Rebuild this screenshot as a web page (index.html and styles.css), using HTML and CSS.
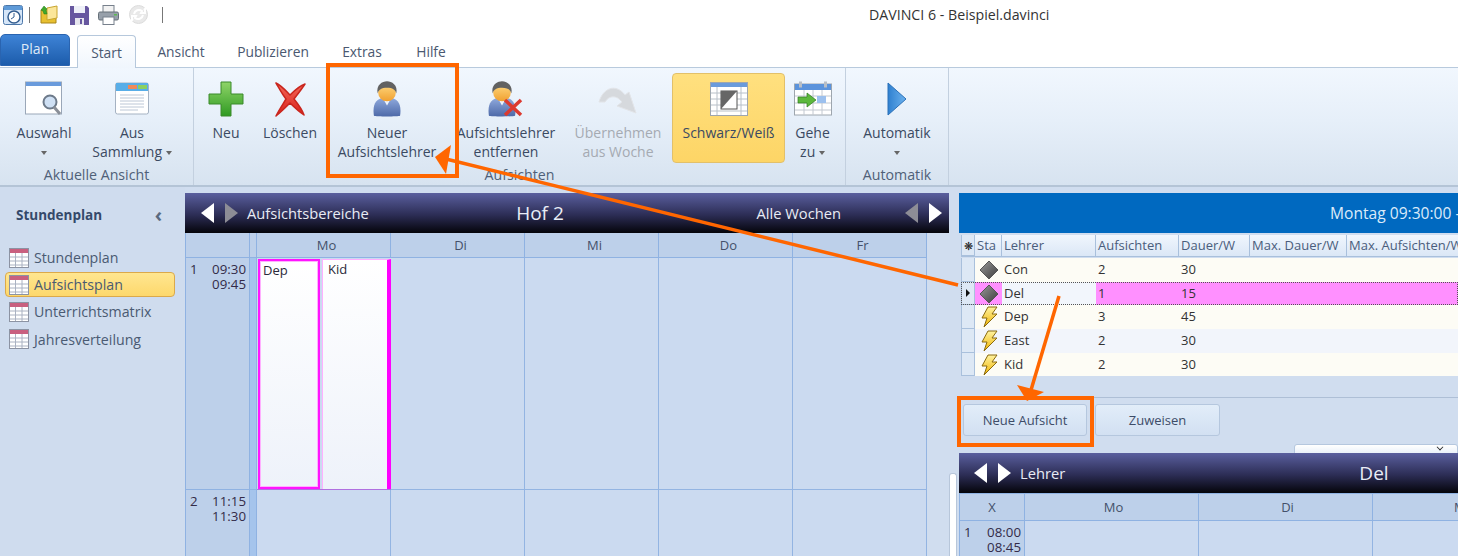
FILE: index.html
```html
<!DOCTYPE html>
<html lang="de">
<head>
<meta charset="utf-8">
<title>DAVINCI 6 - Beispiel.davinci</title>
<link rel="stylesheet" href="styles.css">
</head>
<body>
<svg class="defs" width="0" height="0" aria-hidden="true">
  <defs>
    <linearGradient id="gDia" x1="0" y1="0" x2="1" y2="1"><stop offset="0" stop-color="#9a9a9a"/><stop offset="1" stop-color="#3c3c3c"/></linearGradient>
    <linearGradient id="gBolt" x1="0" y1="0" x2="0" y2="1"><stop offset="0" stop-color="#fff3a0"/><stop offset="1" stop-color="#f0b400"/></linearGradient>
    <linearGradient id="gPlus" x1="0" y1="0" x2="0" y2="1"><stop offset="0" stop-color="#8fd468"/><stop offset="1" stop-color="#2f9a22"/></linearGradient>
    <linearGradient id="gX" x1="0" y1="0" x2="0" y2="1"><stop offset="0" stop-color="#f4685a"/><stop offset="1" stop-color="#d8201a"/></linearGradient>
    <linearGradient id="gPlay" x1="0" y1="0" x2="1" y2="0"><stop offset="0" stop-color="#2f80d0"/><stop offset="1" stop-color="#6cb2ee"/></linearGradient>
    <linearGradient id="gBody" x1="0" y1="0" x2="0" y2="1"><stop offset="0" stop-color="#8fa9dc"/><stop offset="1" stop-color="#4d69a8"/></linearGradient>
    <linearGradient id="gHead" x1="0" y1="0" x2="0" y2="1"><stop offset="0" stop-color="#ffd980"/><stop offset="1" stop-color="#f0a030"/></linearGradient>
    <symbol id="i-table" viewBox="0 0 20 20">
      <rect x="0.5" y="0.5" width="19" height="19" fill="#fff" stroke="#8c93a3"/>
      <rect x="1" y="1" width="18" height="4" fill="#c9607f"/>
      <path d="M1 9h18M1 13h18M1 17h18M6.500 5v14M13 5v14" stroke="#aab2c2" fill="none"/>
    </symbol>
    <symbol id="i-dia" viewBox="0 0 20 20">
      <path d="M10 1l9 9-9 9-9-9z" fill="url(#gDia)" stroke="#555"/>
    </symbol>
    <symbol id="i-bolt" viewBox="0 0 20 22">
      <path d="M9 1h9l-5 7h5L5 21l3-9H3z" fill="url(#gBolt)" stroke="#8a6a10"/>
    </symbol>
    <symbol id="i-person" viewBox="0 0 30 38">
      <path d="M1 37c-2-13 3-18 9-19h10c6 1 11 6 9 19-2 1-26 1-28 0z" fill="url(#gBody)"/>
      <path d="M11 19l4 7 4-7z" fill="#eef3fb"/>
      <circle cx="15" cy="12" r="9.500" fill="url(#gHead)"/>
      <path d="M5 13C3 4 10 0 15 0s12 4 10 13c-1-4-4-6-10-6s-9 2-10 6z" fill="#626262"/>
    </symbol>
  </defs>
</svg>

<div class="app">
  <header class="titlebar">
    <div class="quick">
      <svg class="q q-app" width="20" height="20" viewBox="0 0 20 20"><rect x="0.500" y="0.500" width="19" height="19" rx="2" fill="#d6e6f8" stroke="#4b76a8"/><rect x="1" y="1" width="18" height="4" fill="#5e9ad8"/><circle cx="11" cy="12" r="6" fill="#fff" stroke="#345e90" stroke-width="1.500"/><path d="M11 8v4l-3 2" stroke="#345e90" fill="none"/></svg>
      <span class="q-sep q-sep-a"></span>
      <svg class="q q-open" width="19" height="19" viewBox="0 0 19 19"><path d="M1 5h6l2 2h7v11H1z" fill="#e8c030" stroke="#a88518"/><path d="M7 3l10-2v12l-10 2z" fill="#fbe69a" stroke="#c8a530"/><path d="M1 5l3-4 3 3-1 1 1 4H4L3 6z" fill="#3fa82c" stroke="#25781a" stroke-width="0.500"/></svg>
      <svg class="q q-save" width="19" height="20" viewBox="0 0 19 20"><path d="M0 1h17l2 2v17H0z" fill="#67579f"/><rect x="4" y="1" width="11" height="7" fill="#eef0f8"/><rect x="5" y="13" width="9" height="7" fill="#e6e6ee"/><rect x="10" y="14" width="2" height="5" fill="#67579f"/></svg>
      <svg class="q q-print" width="21" height="20" viewBox="0 0 21 20"><rect x="5" y="0.500" width="11" height="7" fill="#f2f2f2" stroke="#77808c"/><rect x="0.500" y="7" width="20" height="8" rx="1.500" fill="#97a0aa" stroke="#667079"/><rect x="5" y="12" width="11" height="7.500" fill="#fff" stroke="#77808c"/><rect x="16" y="9" width="3" height="1.500" fill="#5dbb50"/></svg>
      <svg class="q q-redo" width="19" height="19" viewBox="0 0 19 19"><circle cx="9.500" cy="9.500" r="9" fill="#e9e9e9" stroke="#dcdcdc"/><path d="M5 9a5 5 0 0 1 8-3l-1 2h4V4l-1 1M14 10a5 5 0 0 1-8 3l1-2H3v4l1-1" fill="none" stroke="#fff" stroke-width="2"/></svg>
      <span class="q-sep q-sep-b"></span>
    </div>
    <div class="doc-title">DAVINCI 6 - Beispiel.davinci</div>
  </header>

  <nav class="tabs">
    <div class="tab-plan">Plan</div>
    <div class="tab tab-active">Start</div>
    <div class="tab tab-ansicht">Ansicht</div>
    <div class="tab tab-pub">Publizieren</div>
    <div class="tab tab-extras">Extras</div>
    <div class="tab tab-hilfe">Hilfe</div>
  </nav>

  <section class="ribbon">
    <div class="group group-view">
      <div class="group-row">
        <div class="rb w88">
          <div class="rb-icon">
            <svg width="38" height="36" viewBox="0 0 38 36"><rect x="0.500" y="1" width="36" height="32" fill="#fff" stroke="#9aa7b8"/><rect x="1" y="1" width="35" height="4" fill="#6a9bdc"/><circle cx="25" cy="21" r="6.500" fill="#cfe0f4" stroke="#6d7a8a" stroke-width="2"/><path d="M29 26l6 7" stroke="#8a8f98" stroke-width="3"/></svg>
          </div>
          <div class="rb-label">Auswahl<br><span class="caret"></span></div>
        </div>
        <div class="rb w88">
          <div class="rb-icon">
            <svg width="34" height="34" viewBox="0 0 34 34"><rect x="0.500" y="1" width="33" height="31" rx="2" fill="#fff" stroke="#a5b2c2"/><rect x="1" y="1" width="32" height="8" fill="#58aee8"/><rect x="13" y="3" width="9" height="4" fill="#ef8a5a"/><rect x="23" y="3" width="9" height="4" fill="#8cd060"/><path d="M5 13h24M5 16h24M5 19h24M5 22h24M5 25h24M5 28h18" stroke="#bcc7d6"/></svg>
          </div>
          <div class="rb-label">Aus<br>Sammlung <span class="caret"></span></div>
        </div>
      </div>
      <div class="group-name">Aktuelle Ansicht</div>
    </div>

    <div class="group group-duty">
      <div class="group-row">
        <div class="rb w64">
          <div class="rb-icon">
            <svg width="36" height="36" viewBox="0 0 36 36"><path d="M13 1h10v12h12v10H23v12H13V23H1V13h12z" fill="url(#gPlus)" stroke="#3a8a2a"/></svg>
          </div>
          <div class="rb-label">Neu</div>
        </div>
        <div class="rb w64">
          <div class="rb-icon">
            <svg width="32" height="35" viewBox="0 0 32 35"><path d="M2 1C8 4 12 9 16 13 20 9 25 4 31 2 27 8 23 13 20 17 24 22 28 27 30 33 24 29 20 25 16 21 12 25 7 30 2 34 5 28 9 22 12 17 8 12 5 6 2 1z" fill="url(#gX)" stroke="#c9261e" stroke-linejoin="round" stroke-width="1.500"/></svg>
          </div>
          <div class="rb-label">Löschen</div>
        </div>
        <div class="rb w130">
          <div class="rb-icon"><svg width="28" height="36"><use href="#i-person"/></svg></div>
          <div class="rb-label">Neuer<br>Aufsichtslehrer</div>
        </div>
        <div class="rb w108">
          <div class="rb-icon">
            <svg width="36" height="36" viewBox="0 0 36 36"><use href="#i-person" width="28" height="36"/><path d="M17 19l16 15M33 19L17 34" stroke="#dc3a30" stroke-width="3.500" fill="none"/></svg>
          </div>
          <div class="rb-label">Aufsichtslehrer<br>entfernen</div>
        </div>
        <div class="rb w96 rb-disabled">
          <div class="rb-icon">
            <svg width="40" height="30" viewBox="0 0 40 30"><path d="M1 18C5 4 18-1 27 11l4-3 7 21-19-7 5-4C19 11 11 11 7 18z" fill="#d6d9dd" stroke="#e2e4e8"/></svg>
          </div>
          <div class="rb-label">Übernehmen<br>aus Woche</div>
        </div>
        <div class="rb w113 rb-on">
          <div class="rb-icon">
            <svg width="38" height="34" viewBox="0 0 38 34"><rect x="0.500" y="0.500" width="37" height="33" fill="#fff" stroke="#9ea6ae"/><rect x="1" y="1" width="36" height="4" fill="#6a9bdc"/><path d="M1 11h36M1 17h36M1 23h36M1 29h36M7 5v28M31 5v28" stroke="#b8c0c8"/><rect x="11" y="9" width="16" height="18" fill="#fff" stroke="#555"/><path d="M11 27V9h16z" fill="#666"/></svg>
          </div>
          <div class="rb-label">Schwarz/Weiß</div>
        </div>
        <div class="rb w55">
          <div class="rb-icon">
            <svg width="38" height="36" viewBox="0 0 38 36"><rect x="0.500" y="3" width="37" height="31" fill="#fff" stroke="#9ea6ae"/><rect x="1" y="3" width="36" height="6" fill="#5b93dc"/><rect x="5" y="0.500" width="3" height="6" fill="#b8bec6"/><rect x="30" y="0.500" width="3" height="6" fill="#b8bec6"/><path d="M1 15h36M1 22h36M1 29h36M10 9v25M19 9v25M28 9v25" stroke="#c2c8d0"/><rect x="23" y="15" width="9" height="7" fill="#9cc0ee"/><path d="M4 16h9v-4l9 7-9 7v-4H4z" fill="#5cb83c" stroke="#2f7a20" stroke-width="0.700"/></svg>
          </div>
          <div class="rb-label">Gehe<br>zu <span class="caret"></span></div>
        </div>
      </div>
      <div class="group-name">Aufsichten</div>
    </div>

    <div class="group group-auto">
      <div class="group-row">
        <div class="rb rb-fill">
          <div class="rb-icon">
            <svg width="20" height="34" viewBox="0 0 20 34"><path d="M1 1l18 16L1 33z" fill="url(#gPlay)" stroke="#2a70b8"/></svg>
          </div>
          <div class="rb-label">Automatik<br><span class="caret"></span></div>
        </div>
      </div>
      <div class="group-name">Automatik</div>
    </div>
    <div class="ribbon-rest"></div>
  </section>

  <main class="workspace">
    <aside class="sidebar">
      <div class="side-head"><span>Stundenplan</span><span class="side-collapse">‹</span></div>
      <ul class="side-list">
        <li class="side-item"><svg width="20" height="20"><use href="#i-table"/></svg>Stundenplan</li>
        <li class="side-item side-active"><svg width="20" height="20"><use href="#i-table"/></svg>Aufsichtsplan</li>
        <li class="side-item"><svg width="20" height="20"><use href="#i-table"/></svg>Unterrichtsmatrix</li>
        <li class="side-item"><svg width="20" height="20"><use href="#i-table"/></svg>Jahresverteilung</li>
      </ul>
    </aside>

    <section class="center">
      <div class="darkbar">
        <div class="dark-left">
          <span class="arr arr-l"></span><span class="arr arr-r arr-dim"></span>
          <span class="dark-label">Aufsichtsbereiche</span>
        </div>
        <div class="dark-title dark-title-hof">Hof 2</div>
        <div class="dark-right">
          <span class="dark-label">Alle Wochen</span>
          <span class="arr arr-l arr-dim arr-gap"></span><span class="arr arr-r"></span>
        </div>
      </div>
      <div class="plan">
        <div class="ph"></div><div class="ph-thin"></div>
        <div class="ph ph-day">Mo</div><div class="ph ph-day">Di</div><div class="ph ph-day">Mi</div><div class="ph ph-day">Do</div><div class="ph ph-day">Fr</div>

        <div class="pt r1"><span>1</span><span class="pt-time">09:30<br>09:45</span></div>
        <div class="p-thin r1"></div>
        <div class="pc r1 pc-duty">
          <div class="duty duty-a">Dep</div>
          <div class="duty duty-b">Kid</div>
        </div>
        <div class="pc r1"></div><div class="pc r1"></div><div class="pc r1"></div><div class="pc r1"></div>

        <div class="pt"><span>2</span><span class="pt-time">11:15<br>11:30</span></div>
        <div class="p-thin"></div>
        <div class="pc"></div><div class="pc"></div><div class="pc"></div><div class="pc"></div><div class="pc"></div>
      </div>
    </section>

    <div class="splitter"><div class="scroll-stub"></div></div>

    <section class="right">
      <div class="bluebar">Montag 09:30:00 - 09:45:00</div>
      <div class="teachers">
        <div class="tr th">
          <div class="c0 c0-star">❋</div><div class="c1">Sta</div><div class="c2">Lehrer</div><div class="c3">Aufsichten</div><div class="c4">Dauer/W</div><div class="c5">Max. Dauer/W</div><div class="c6">Max. Aufsichten/W</div>
        </div>
        <div class="tr odd"><div class="c0"></div><div class="c1"><svg width="20" height="20"><use href="#i-dia"/></svg></div><div class="c2">Con</div><div class="c3">2</div><div class="c4">30</div><div class="c5"></div><div class="c6"></div></div>
        <div class="tr sel"><div class="c0"><span class="row-mark"></span></div><div class="c1"><svg width="20" height="20"><use href="#i-dia"/></svg></div><div class="c2">Del</div><div class="c3">1</div><div class="c4">15</div><div class="c5"></div><div class="c6"></div></div>
        <div class="tr odd"><div class="c0"></div><div class="c1"><svg width="20" height="22"><use href="#i-bolt"/></svg></div><div class="c2">Dep</div><div class="c3">3</div><div class="c4">45</div><div class="c5"></div><div class="c6"></div></div>
        <div class="tr even"><div class="c0"></div><div class="c1"><svg width="20" height="22"><use href="#i-bolt"/></svg></div><div class="c2">East</div><div class="c3">2</div><div class="c4">30</div><div class="c5"></div><div class="c6"></div></div>
        <div class="tr odd"><div class="c0"></div><div class="c1"><svg width="20" height="22"><use href="#i-bolt"/></svg></div><div class="c2">Kid</div><div class="c3">2</div><div class="c4">30</div><div class="c5"></div><div class="c6"></div></div>
      </div>
      <div class="tbl-foot"></div>
      <div class="actions">
        <button class="btn" type="button">Neue Aufsicht</button>
        <button class="btn" type="button">Zuweisen</button>
      </div>
      <div class="combo-row"><div class="combo"><span class="combo-v"></span></div></div>
      <div class="darkbar darkbar-r">
        <div class="dark-left dark-left-r">
          <span class="arr arr-l"></span><span class="arr arr-r"></span>
          <span class="dark-label">Lehrer</span>
        </div>
        <div class="dark-title dark-title-del">Del</div>
      </div>
      <div class="plan2">
        <div class="ph ph2">X</div><div class="ph ph2 ph-day2">Mo</div><div class="ph ph2 ph-day2">Di</div><div class="ph ph2 ph-day2">Mi</div>
        <div class="pt pt2"><span>1</span><span class="pt-time">08:00<br>08:45</span></div>
        <div class="pc"></div><div class="pc"></div><div class="pc"></div>
      </div>
    </section>
  </main>

  <svg class="annot" width="1458" height="556" viewBox="0 0 1458 556" aria-hidden="true">
    <rect x="328" y="65" width="129" height="111" fill="none" stroke="#ff6600" stroke-width="4"/>
    <rect x="959" y="398" width="133" height="47" fill="none" stroke="#ff6600" stroke-width="4"/>
    <path d="M958 285L446 159" stroke="#ff6600" stroke-width="3.500" fill="none"/>
    <path d="M435 157L451 145 446 174z" fill="#ff6600"/>
    <path d="M1059 296L1031 390" stroke="#ff6600" stroke-width="3.500" fill="none"/>
    <path d="M1027 401L1017 385 1044 392z" fill="#ff6600"/>
  </svg>
</div>
</body>
</html>
```

FILE: styles.css
```css
* { box-sizing: border-box; }
html, body { margin: 0; padding: 0; }
body {
  width: 1458px;
  height: 556px;
  overflow: hidden;
  background: #fff;
  font-family: "Open Sans", "Noto Sans", "Liberation Sans", sans-serif;
  font-size: 13px;
  color: #3b4a62;
}
.defs { position: absolute; }
.app { position: relative; width: 1458px; height: 556px; overflow: hidden; display: flex; flex-direction: column; }

/* title bar */
.titlebar { height: 33px; display: flex; align-items: flex-start; background: #fff; flex: none; }
.quick { width: 700px; height: 33px; display: flex; align-items: flex-start; padding-left: 3px; padding-top: 5px; }
.q { flex: none; display: block; }
.q-sep { width: 1px; height: 16px; background: #777; margin-top: 2px; flex: none; }
.q-sep-a { margin-left: 6px; }
.q-open { margin-left: 10px; }
.q-save { margin-left: 11px; }
.q-print { margin-left: 9px; }
.q-redo { margin-left: 10px; }
.q-sep-b { margin-left: 14px; }
.doc-title { padding-top: 5px; margin-left: 169px; font-size: 14.200px; color: #333; white-space: nowrap; }

/* tabs */
.tabs { height: 34px; flex: none; display: flex; align-items: flex-end; position: relative; background: #fff; }
.tab-plan {
  width: 70px; height: 32px; margin-bottom: 1px;
  border-radius: 5px 5px 0 0;
  background: linear-gradient(#3e83d6, #1c5cab);
  border: 1px solid #2a64b0;
  color: #dfeaf8; text-align: center; line-height: 28px; font-size: 14px;
}
.tab { height: 32px; line-height: 34px; text-align: center; font-size: 13.800px; color: #4a5870; }
.tab-active {
  width: 59px; margin-left: 7px; margin-bottom: -1px; height: 33px; z-index: 1;
  background: linear-gradient(#fff, #f0f6fd);
  border: 1px solid #b6c8dc; border-bottom: 0; border-radius: 4px 4px 0 0;
}
.tab-ansicht { width: 86px; margin-left: 2px; margin-right: -2px; }
.tab-pub { width: 102px; margin-left: 0; }
.tab-extras { width: 76px; }
.tab-hilfe { width: 62px; }

/* ribbon */
.ribbon {
  height: 120px; flex: none; display: flex;
  background: linear-gradient(#f1f7fe, #e6eff9 45%, #d7e3f0);
  border-top: 1px solid #b8cadd;
  border-bottom: 2px solid #b4c4d6;
}
.group { display: flex; flex-direction: column; padding-top: 5px; border-right: 1px solid #c3d0df; flex: none; }
.group-view { width: 194px; }
.group-duty { width: 652px; }
.group-auto { width: 103px; }
.ribbon-rest { flex: 1; }
.group-row { display: flex; height: 90px; flex: none; }
.group-name { flex: 1; text-align: center; font-size: 14.200px; line-height: 24px; color: #4f6078; }
.group-view .group-row { padding-right: 17px; }
.rb { display: flex; flex-direction: column; align-items: center; flex: none; padding-top: 7px; }
.w88 { width: 88px; }
.w64 { width: 64px; }
.w130 { width: 130px; }
.w108 { width: 108px; }
.w96 { width: 96px; margin-left: 10px; margin-right: 6px; }
.w113 { width: 113px; }
.w55 { width: 55px; }
.rb-fill { flex: 1; }
.rb-icon { height: 38px; margin-bottom: 5px; display: flex; align-items: center; justify-content: center; flex: none; }
.rb-label { text-align: center; font-size: 14px; line-height: 19px; color: #3b4a62; white-space: nowrap; }
.rb-disabled .rb-label { color: #a5aab2; }
.rb-on {
  background: linear-gradient(#ffe07f, #fdd566);
  border: 1px solid #e2c06a; border-radius: 4px;
  padding-top: 6px;
}
.caret {
  display: inline-block; width: 0; height: 0; vertical-align: middle;
  border-left: 3.500px solid transparent; border-right: 3.500px solid transparent;
  border-top: 4px solid #666;
}

/* workspace */
.workspace { flex: 1; min-height: 0; display: flex; background: #d0ddef; }
.sidebar { width: 185px; flex: none; padding-top: 18px; background: #cfdcee; }
.side-head {
  display: flex; justify-content: space-between; align-items: center;
  padding: 0 23px 0 16px; height: 20px;
  font-weight: 700; font-size: 13.500px; color: #34496a;
}
.side-collapse { font-size: 20px; font-weight: 700; color: #5a6a80; line-height: 20px; }
.side-list { list-style: none; margin: 19px 0 0; padding: 0; }
.side-item {
  display: flex; align-items: center; gap: 5px; height: 27.300px;
  margin: 0 10px 0 5px; padding-left: 4px;
  font-size: 14.200px; color: #4a5a72; white-space: nowrap;
}
.side-active {
  background: linear-gradient(#ffe690, #fdd86c);
  border: 1px solid #dba94a; border-radius: 4px;
  height: 25px; margin-top: 1px; margin-bottom: 1px; padding-left: 3px;
}

.center { width: 764px; flex: none; padding-top: 6px; min-width: 0; }
.darkbar {
  height: 40px; display: flex; align-items: center; color: #e8ebf4;
  background: linear-gradient(#5a5f9e, #2c2d55 55%, #04040a);
}
.dark-left { width: 270px; flex: none; display: flex; align-items: center; padding-left: 16px; }
.dark-left-r { width: 360px; padding-left: 15px; }
.dark-label { font-size: 14.700px; white-space: nowrap; }
.dark-left .dark-label { margin-left: 9px; }
.dark-title { font-size: 19px; text-align: center; color: #e9edf6; }
.dark-title-hof { width: 170px; flex: none; }
.dark-title-del { width: 110px; flex: none; }
.dark-right { flex: 1; display: flex; align-items: center; justify-content: flex-end; padding-right: 7px; }
.arr { width: 0; height: 0; flex: none; border-top: 10px solid transparent; border-bottom: 10px solid transparent; }
.arr-l { border-right: 13px solid #fff; }
.arr-r { border-left: 13px solid #fff; margin-left: 11px; }
.arr-r.arr-dim { border-left-color: #8d8d96; }
.arr-l.arr-dim { border-right-color: #8d8d96; }
.arr-gap { margin-left: 64px; }

.plan {
  display: grid;
  grid-template-columns: 64px 7px repeat(5, 134px);
  grid-template-rows: 25px 232px 80px;
  width: 741px;
  border-left: 1px solid #8fb2e2;
  font-size: 13px; color: #3a3f50;
}
.ph {
  background: #bdd0ea; border-right: 1px solid #8fb2e2; border-bottom: 1px solid #8fb2e2;
  display: flex; align-items: center; justify-content: center;
  font-size: 13px; color: #44506a;
}
.ph-day { padding-left: 6px; }
.ph-day2 { padding-left: 4px; }
.ph-thin { background: #bdd0ea; border-right: 1px solid #8fb2e2; border-bottom: 1px solid #8fb2e2; }
.pt {
  background: #bdd0ea; border-right: 1px solid #8fb2e2; border-bottom: 1px solid #8fb2e2;
  display: flex; justify-content: space-between; padding: 4px 3px 0 4px;
  font-size: 13.300px; line-height: 15px; color: #332b48;
}
.pt-time { text-align: right; }
.p-thin { background: #a5c4ec; border-right: 1px solid #8fb2e2; border-bottom: 1px solid #8fb2e2; }
.pc { background: #cbdaf0; border-right: 1px solid #93b4e2; border-bottom: 1px solid #93b4e2; }
.pc-duty { display: flex; padding: 1px 0 0 1px; gap: 2px; border-right: 0; border-bottom-color: #b070e0; }
.duty { font-size: 13px; line-height: 15px; color: #2a2a3a; padding: 2px 0 0 3px; background: linear-gradient(#fff, #eef2fa); }
.duty-a { width: 62px; border: 2px solid #ff14ff; box-shadow: inset 0 0 0 1px #ffb0ff; }
.duty-b { flex: 1; border-top: 1px solid #ffb0ff; border-left: 1px solid #ffb0ff; border-right: 4px solid #ff00ff; padding-left: 5px; }

.splitter { width: 10px; flex: none; position: relative; display: flex; flex-direction: column; justify-content: flex-end; }
.scroll-stub { width: 8px; height: 83px; background: #fff; border: 1px solid #b7c6da; border-bottom: 0; border-radius: 3px 3px 0 0; }

.right { width: 499px; flex: none; padding-top: 6px; overflow: hidden; }
.bluebar {
  height: 40px; background: #0069c0; color: #dcebfa; font-size: 15.600px; line-height: 41px;
  padding-left: 371px; white-space: nowrap; overflow: hidden;
}
.teachers { margin-top: 2px; margin-left: 2px; }
.tr { display: flex; height: 23.700px; font-size: 13px; line-height: 22px; color: #333; }
.tr > div { flex: none; overflow: hidden; white-space: nowrap; padding-left: 2px; }
.c0 { width: 14px; background: #dde8f5; border: 1px solid #a9c0dc; border-top: 0; display: flex; align-items: center; justify-content: center; }
.tr > .c0 { padding-left: 0; }
.c1 { width: 27px; display: flex; align-items: center; justify-content: center; }
.tr > .c1 { padding-left: 0; }
.c2 { width: 94px; }
.c3 { width: 83px; }
.c4 { width: 71px; }
.c5 { width: 97px; }
.c6 { width: 200px; }
.th { height: 22px; margin-bottom: 1px; background: linear-gradient(#f0f6fd, #dbe7f6); color: #4a5d7c; line-height: 21px; font-size: 13px; border-bottom: 1px solid #a9c0dc; }
.th > div { border-right: 1px solid #a9c0dc; }
.th .c1 { justify-content: flex-start; padding-left: 2px; }
.c0-star { font-size: 11px; color: #222; }
.odd { background: #fdfcf5; }
.even { background: #f2f5fb; }
.sel { background: #ff90ff; outline: 1px dotted #555; outline-offset: -1px; }
.sel .c2 { background: #f2f6fc; }
.row-mark { width: 0; height: 0; border-top: 4px solid transparent; border-bottom: 4px solid transparent; border-left: 4px solid #111; }
.tbl-foot { height: 22px; border-bottom: 1px solid #aebfd6; margin-left: 1px; }
.actions { display: flex; gap: 8px; padding: 6px 0 0 4px; height: 46px; }
.btn {
  width: 124px; height: 32px; padding: 0; margin: 0;
  background: linear-gradient(#e2edf9, #d2e0f2);
  border: 1px solid #b5c7de; border-radius: 3px;
  font-family: inherit; font-size: 13px; color: #3d4c68;
}
.btn + .btn { width: 125px; }
.combo-row { height: 9px; padding-left: 335px; overflow: hidden; }
.combo { position: relative; height: 14px; background: linear-gradient(#fff, #e0eaf6); border: 1px solid #b5c7de; border-radius: 3px; }
.combo-v { position: absolute; left: 142px; top: -1px; width: 6px; height: 6px; border-right: 1.500px solid #222; border-bottom: 1.500px solid #222; transform: rotate(45deg) scale(.8); }
.darkbar-r { height: 40px; }
.plan2 {
  display: grid;
  grid-template-columns: 65px 174px 174px 174px;
  grid-template-rows: 27px 60px;
  border-left: 1px solid #8fb2e2;
  border-top: 1px solid #8fb2e2;
}
.annot { position: absolute; left: 0; top: 0; pointer-events: none; }
```
